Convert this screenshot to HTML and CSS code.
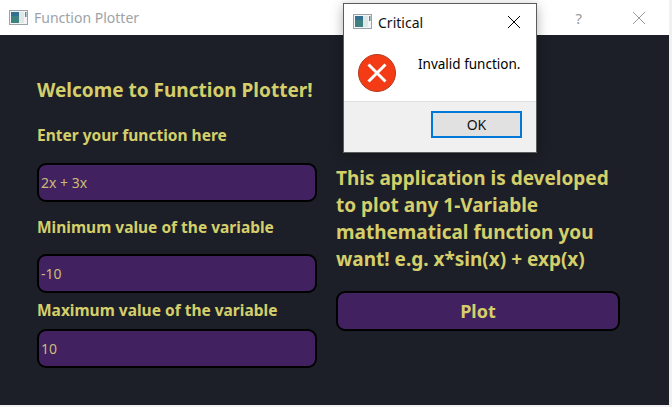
FILE: index.html
```html
<!DOCTYPE html>
<html lang="en">
<head>
<meta charset="utf-8">
<title>Function Plotter</title>
<link rel="stylesheet" href="styles.css">
</head>
<body>
<div class="window">
  <header class="titlebar">
    <svg class="appicon" width="19" height="16" viewBox="0 0 19 16"><rect x="0.5" y="0.5" width="18" height="14" fill="#f2f4f5" stroke="#9aa3a8"/><rect x="2" y="2" width="8" height="11" fill="#3f8080"/><rect x="2" y="2" width="8" height="4" fill="#33708f"/><rect x="10" y="2" width="5" height="11" fill="#dfe8e6"/><rect x="16" y="2" width="1.5" height="5" fill="#5f8f8f"/></svg>
    <span class="title">Function Plotter</span>
    <span class="help">?</span>
    <svg class="close" width="14" height="14" viewBox="0 0 14 14"><path d="M1 1 13 13M13 1 1 13" stroke="#9a9a9a" fill="none"/></svg>
  </header>
  <main class="body">
    <section class="left">
      <h1 class="welcome">Welcome to Function Plotter!</h1>
      <label class="label label-first">Enter your function here</label>
      <div class="field">2x + 3x</div>
      <label class="label label-second">Minimum value of the variable</label>
      <div class="field">-10</div>
      <label class="label label-third">Maximum value of the variable</label>
      <div class="field">10</div>
    </section>
    <section class="right">
      <p class="about">This application is developed<br>to plot any 1-Variable<br>mathematical function you<br>want! e.g. x*sin(x) + exp(x)</p>
      <button class="plot">Plot</button>
    </section>
  </main>
</div>
<div class="dialog">
  <div class="dialog-title">
    <svg class="appicon" width="19" height="16" viewBox="0 0 19 16"><rect x="0.5" y="0.5" width="18" height="14" fill="#f2f4f5" stroke="#9aa3a8"/><rect x="2" y="2" width="8" height="11" fill="#3f8080"/><rect x="2" y="2" width="8" height="4" fill="#33708f"/><rect x="10" y="2" width="5" height="11" fill="#dfe8e6"/><rect x="16" y="2" width="1.5" height="5" fill="#5f8f8f"/></svg>
    <span class="dialog-name">Critical</span>
    <svg class="dialog-close" width="14" height="14" viewBox="0 0 14 14"><path d="M1 1 13 13M13 1 1 13" stroke="#000" fill="none"/></svg>
  </div>
  <div class="dialog-main">
    <svg class="erricon" width="38" height="38" viewBox="0 0 38 38"><circle cx="19" cy="19" r="18.5" fill="#f33c16" stroke="#b5391c"/><path d="M10.500 10.500 27.500 27.500M27.500 10.500 10.500 27.500" stroke="#fff" stroke-width="3" fill="none"/></svg>
    <span class="message">Invalid function.</span>
  </div>
  <div class="dialog-foot"><button class="ok">OK</button></div>
</div>
</body>
</html>
```
FILE: styles.css
```css
* { box-sizing: border-box; }
html, body { margin: 0; padding: 0; }
body {
  width: 672px;
  height: 407px;
  overflow: hidden;
  background: #f1f1f1;
  font-family: "Noto Sans", "Open Sans", sans-serif;
  position: relative;
}
.window { width: 669px; height: 405px; display: flex; flex-direction: column; }
.titlebar {
  height: 35px;
  flex: none;
  background: #fff;
  display: flex;
  align-items: center;
  padding-left: 9px;
  color: #a3a3a3;
}
.appicon { flex: none; }
.title { font-size: 14px; margin-left: 6px; color: #9da3a8; }
.help { margin-left: auto; font-size: 15px; color: #9a9a9a; margin-right: 50px; }
.close { margin-right: 23px; }
.body {
  flex: 1;
  background: #1c1f27;
  display: flex;
  padding-left: 37px;
  gap: 19px;
  color: #d4cf6a;
}
.left { width: 280px; display: flex; flex-direction: column; }
.welcome { margin: 41px 0 0; font-size: 19px; line-height: 28px; font-weight: 700; white-space: nowrap; }
.label { font-size: 15.500px; line-height: 22px; font-weight: 700; white-space: nowrap; display: block; }
.label-first { margin-top: 20px; margin-bottom: 17px; }
.label-second { margin-top: 14px; margin-bottom: 16px; }
.label-third { margin-top: 6px; margin-bottom: 8px; }
.field {
  height: 39px;
  border: 2px solid #000;
  border-radius: 9px;
  background: #41215f;
  color: #c9bd78;
  font-size: 14px;
  line-height: 35px;
  padding-left: 2px;
}
.right { width: 284px; display: flex; flex-direction: column; }
.about { margin: 130px 0 0; font-size: 19px; line-height: 27px; font-weight: 700; white-space: nowrap; }
.plot {
  margin-top: 18px;
  height: 40px;
  border: 2px solid #000;
  border-radius: 9px;
  background: #41215f;
  color: #d4cf6a;
  font: 700 18px "Noto Sans", "Open Sans", sans-serif;
}
.dialog {
  position: absolute;
  left: 343px;
  top: 3px;
  width: 194px;
  height: 150px;
  background: #fff;
  border: 1px solid #5c5c5c;
  box-shadow: 0 3px 12px rgba(0,0,0,.3);
  display: flex;
  flex-direction: column;
  color: #000;
}
.dialog-title { height: 36px; flex: none; display: flex; align-items: center; padding-left: 9px; }
.dialog-name { font-size: 14px; margin-left: 6px; color: #111; }
.dialog-close { margin-left: auto; margin-right: 15px; }
.dialog-main { flex: 1; position: relative; display: flex; padding-left: 14px; }
.erricon { margin-top: 14px; flex: none; }
.message { font-size: 13.500px; margin-left: 22px; margin-top: 15px; line-height: 18px; white-space: nowrap; }
.dialog-foot {
  height: 51px;
  flex: none;
  background: #f0f0f0;
  border-top: 1px solid #dfdfdf;
  display: flex;
  justify-content: flex-end;
  align-items: flex-start;
  padding: 9px 14px 0 0;
}
.ok {
  width: 91px;
  height: 27px;
  background: #e1e1e1;
  border: 2px solid #0078d7;
  font: 14px "Noto Sans", "Open Sans", sans-serif;
  color: #111;
  padding: 0;
}
```
